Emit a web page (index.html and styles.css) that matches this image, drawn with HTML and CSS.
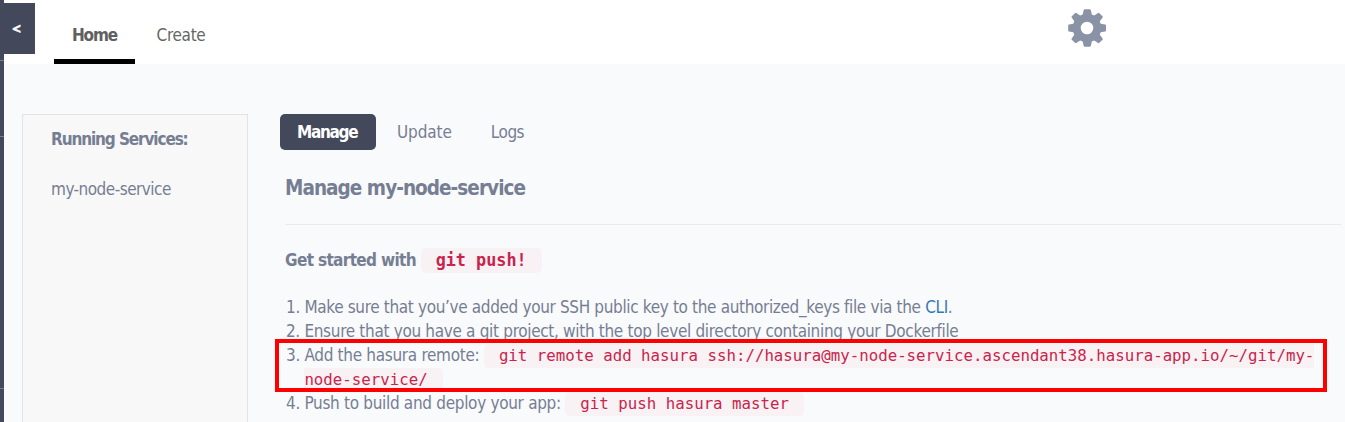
FILE: index.html
```html
<!DOCTYPE html>
<html lang="en">
<head>
<meta charset="utf-8">
<title>Manage my-node-service</title>
<link rel="stylesheet" href="styles.css">
</head>
<body>
<div class="app">
  <aside class="rail">
    <div class="rail-item rail-first"></div>
    <div class="rail-item rail-second"></div>
    <div class="rail-item rail-third"></div>
  </aside>
  <div class="page">
    <header class="topbar">
      <button class="collapse">&lt;</button>
      <nav class="nav">
        <a class="nav-link active">Home</a>
        <a class="nav-link">Create</a>
      </nav>
      <svg class="gear" viewBox="0 0 38 38" width="38" height="38">
        <path fill="#8a92a5" fill-rule="evenodd" d="M15.7 1Q15.9 .2 16.7 .2H21.8Q22.6 .2 22.8 1L23.8 5.6L26.2 6.6L30.1 4.1Q30.8 3.6 31.4 4.2L34.5 7.3Q35.1 7.9 34.6 8.6L31.8 12.3L32.7 14.8L37.1 15.5Q38 15.7 38 16.5V21.4Q38 22.2 37.1 22.4L32.7 23.3L31.8 25.7L34.6 29.4Q35.1 30.1 34.5 30.7L31.4 33.8Q30.8 34.4 30.1 33.9L26.2 31.6L23.8 32.6L22.8 37Q22.6 37.8 21.8 37.8H16.7Q15.9 37.8 15.7 37L14.7 32.6L12.1 31.6L8.3 33.9Q7.6 34.4 7 33.8L3.8 30.7Q3.2 30.1 3.7 29.4L6.3 25.7L5.3 23.3L1 22.4Q.2 22.2 .2 21.4V16.5Q.2 15.7 1 15.5L5.3 14.8L6.3 12.3L3.7 8.6Q3.2 7.9 3.8 7.3L7 4.2Q7.6 3.6 8.3 4.1L12.1 6.6L14.7 5.6ZM25.3 19A6.3 6.3 0 1 0 12.7 19A6.3 6.3 0 1 0 25.3 19Z"/>
      </svg>
    </header>
    <div class="body">
      <aside class="services">
        <div class="services-title">Running Services:</div>
        <a class="service">my-node-service</a>
      </aside>
      <main class="content">
        <div class="tabs">
          <a class="tab selected">Manage</a>
          <a class="tab update">Update</a>
          <a class="tab logs">Logs</a>
        </div>
        <h2 class="title">Manage my-node-service</h2>
        <h3 class="subtitle">Get started with <code class="code">git push!</code></h3>
        <ol class="steps">
          <li>Make sure that you’ve added your SSH public key to the authorized_keys file via the <a class="link">CLI</a>.</li>
          <li class="step-two">Ensure that you have a git project, with the top level directory containing your Dockerfile</li>
          <li class="step-remote"><span class="lead">Add the hasura remote:</span> <code class="code">git remote add hasura ssh://hasura@my-node-service.ascendant38.hasura-app.io/~/git/my-<wbr>node-service/</code><span class="highlight"></span></li>
          <li><span class="lead">Push to build and deploy your app:</span> <code class="code">git push hasura master</code></li>
        </ol>
      </main>
    </div>
  </div>
</div>
</body>
</html>
```
FILE: styles.css
```css
* { box-sizing: border-box; }
body {
  margin: 0;
  height: 422px;
  overflow: hidden;
  background: #f9fafc;
  color: #767e93;
  font: 17px/24px "DejaVu Sans Condensed", "DejaVu Sans", sans-serif;
}
.app { display: flex; height: 422px; }
.rail { flex: none; width: 4px; background: #43485a; }
.rail-item { border-bottom: 1px solid #767e93; }
.rail-first { height: 61px; }
.rail-second { height: 76px; }
.rail-third { height: 252px; }
.page { flex: 1; min-width: 0; display: flex; flex-direction: column; }
.topbar { flex: none; display: flex; height: 64px; background: #fff; }
.collapse {
  width: 31px;
  height: 51px;
  margin-top: 3px;
  padding: 0 6px 2px 0;
  border: 0;
  background: #43485a;
  color: #fff;
  font: bold 15px "Noto Sans", sans-serif;
  -webkit-text-stroke: .5px #fff;
}
.nav { display: flex; margin-left: 19px; }
.nav-link { height: 64px; padding: 23px 18px 0; color: #666; letter-spacing: -.3px; }
.nav-link.active {
  width: 81px;
  border-bottom: 5px solid #000;
  color: #606060;
  font-weight: bold;
  letter-spacing: -1.2px;
}
.nav-link:last-child { width: 85px; padding-left: 21.5px; }
.gear { margin: 9px 0 0 848px; }
.body { flex: 1; display: flex; padding: 50px 4px 0 18px; min-height: 0; }
.services {
  flex: none;
  width: 226px;
  padding: 12px 28px;
  border: 1px solid #e3e3e3;
  border-bottom: 0;
  background: #f8f8f8;
}
.services-title { font-weight: bold; letter-spacing: -1.12px; white-space: nowrap; }
.service { display: block; margin-top: 26px; letter-spacing: -.52px; }
.content { flex: 1; min-width: 0; padding-left: 32px; }
.tabs { display: flex; height: 36px; line-height: 36px; }
.tab.selected {
  width: 96px;
  padding-left: 17px;
  border-radius: 5px;
  background: #43485a;
  color: #fff;
  font-weight: bold;
  letter-spacing: -1.3px;
}
.tab.update { margin-left: 21px; letter-spacing: -.1px; }
.tab.logs { margin-left: 39px; letter-spacing: -.5px; }
.title {
  height: 75px;
  margin: 0 0 0 5px;
  padding-top: 26px;
  border-bottom: 1px solid #ebebed;
  font-size: 20.5px;
  letter-spacing: -.95px;
}
.subtitle {
  margin: 23px 0 23px 5px;
  font-size: 17px;
  line-height: 24px;
  letter-spacing: -.65px;
}
.code {
  padding: 2px 15px 3px;
  border-radius: 5px;
  background: #f9f2f4;
  color: #c7254e;
  font: 15.76px "DejaVu Sans Mono", monospace;
  letter-spacing: 0;
}
.subtitle .code { font-size: 16.8px; font-weight: bold; }
.steps { margin: 0 0 0 5px; padding-left: 19.4px; letter-spacing: -.35px; }
.step-two { letter-spacing: -.32px; }
.lead { letter-spacing: -.31px; }
.link { color: #337ab7; }
.step-remote { position: relative; }
.highlight {
  position: absolute;
  top: -4px;
  left: -29.4px;
  width: 1052px;
  height: 53px;
  border: 4px solid #f00;
}
```
